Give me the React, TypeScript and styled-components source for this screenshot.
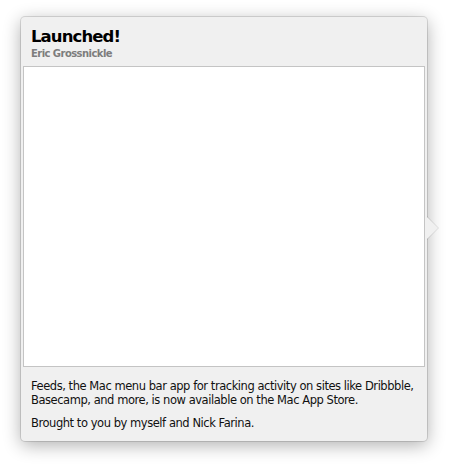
import styled, { createGlobalStyle } from 'styled-components';

const GlobalStyle = createGlobalStyle`
  html, body {
    margin: 0;
    padding: 0;
    background: #ffffff;
  }
  body {
    font-family: "DejaVu Sans", "Liberation Sans", sans-serif;
    -webkit-font-smoothing: antialiased;
  }
`;

const App = () => {
  return (
    <>
      <GlobalStyle />
      <S.Page>
        <S.Popover>
          <S.Header>
            <S.Title>Launched!</S.Title>
            <S.Author>Eric Grossnickle</S.Author>
          </S.Header>
          <S.Preview />
          <S.Body>
            <S.Paragraph>
              Feeds, the Mac menu bar app for tracking activity on sites like Dribbble,
              <br />
              Basecamp, and more, is now available on the Mac App Store.
            </S.Paragraph>
            <S.Paragraph>Brought to you by myself and Nick Farina.</S.Paragraph>
          </S.Body>
        </S.Popover>
      </S.Page>
    </>
  );
};

export default App;

const S = {
  Page: styled.div`
    width: 453px;
    height: 466px;
    padding: 17px 0 0 21px;
    box-sizing: border-box;
  `,
  Popover: styled.div`
    position: relative;
    width: 406px;
    height: 424px;
    box-sizing: border-box;
    padding: 0 2px;
    display: flex;
    flex-direction: column;
    background: #f0f0f0;
    border-radius: 4px;
    box-shadow: 0 0 0 1px rgba(0, 0, 0, 0.12), 0 4px 18px rgba(0, 0, 0, 0.32);

    /* arrow pointing at the menu bar item */
    &::before,
    &::after {
      content: '';
      position: absolute;
      top: 50%;
      width: 0;
      height: 0;
      border-style: solid;
    }
    &::before {
      right: -12px;
      margin-top: -13px;
      border-width: 12px 0 12px 12px;
      border-color: transparent transparent transparent rgba(0, 0, 0, 0.1);
    }
    &::after {
      right: -11px;
      margin-top: -12px;
      border-width: 11px 0 11px 11px;
      border-color: transparent transparent transparent #f0f0f0;
    }
  `,
  Header: styled.div`
    flex-shrink: 0;
    padding: 9px 8px 0;
    height: 49px;
    box-sizing: border-box;
  `,
  Title: styled.h1`
    margin: 0;
    font-size: 16.5px;
    line-height: 21px;
    font-weight: bold;
    color: #000000;
    letter-spacing: -0.9px;
  `,
  Author: styled.div`
    font-size: 10px;
    line-height: 13px;
    font-weight: bold;
    color: #7d7d7d;
    letter-spacing: -0.55px;
  `,
  Preview: styled.div`
    flex-shrink: 0;
    height: 301px;
    box-sizing: border-box;
    background: #ffffff;
    border: 1px solid #c4c4c4;
  `,
  Body: styled.div`
    padding: 12px 0 0 8px;
  `,
  Paragraph: styled.p`
    margin: 0 0 9px;
    font-size: 11.5px;
    line-height: 14px;
    color: #111111;
    letter-spacing: -0.45px;
    white-space: nowrap;
  `,
};
